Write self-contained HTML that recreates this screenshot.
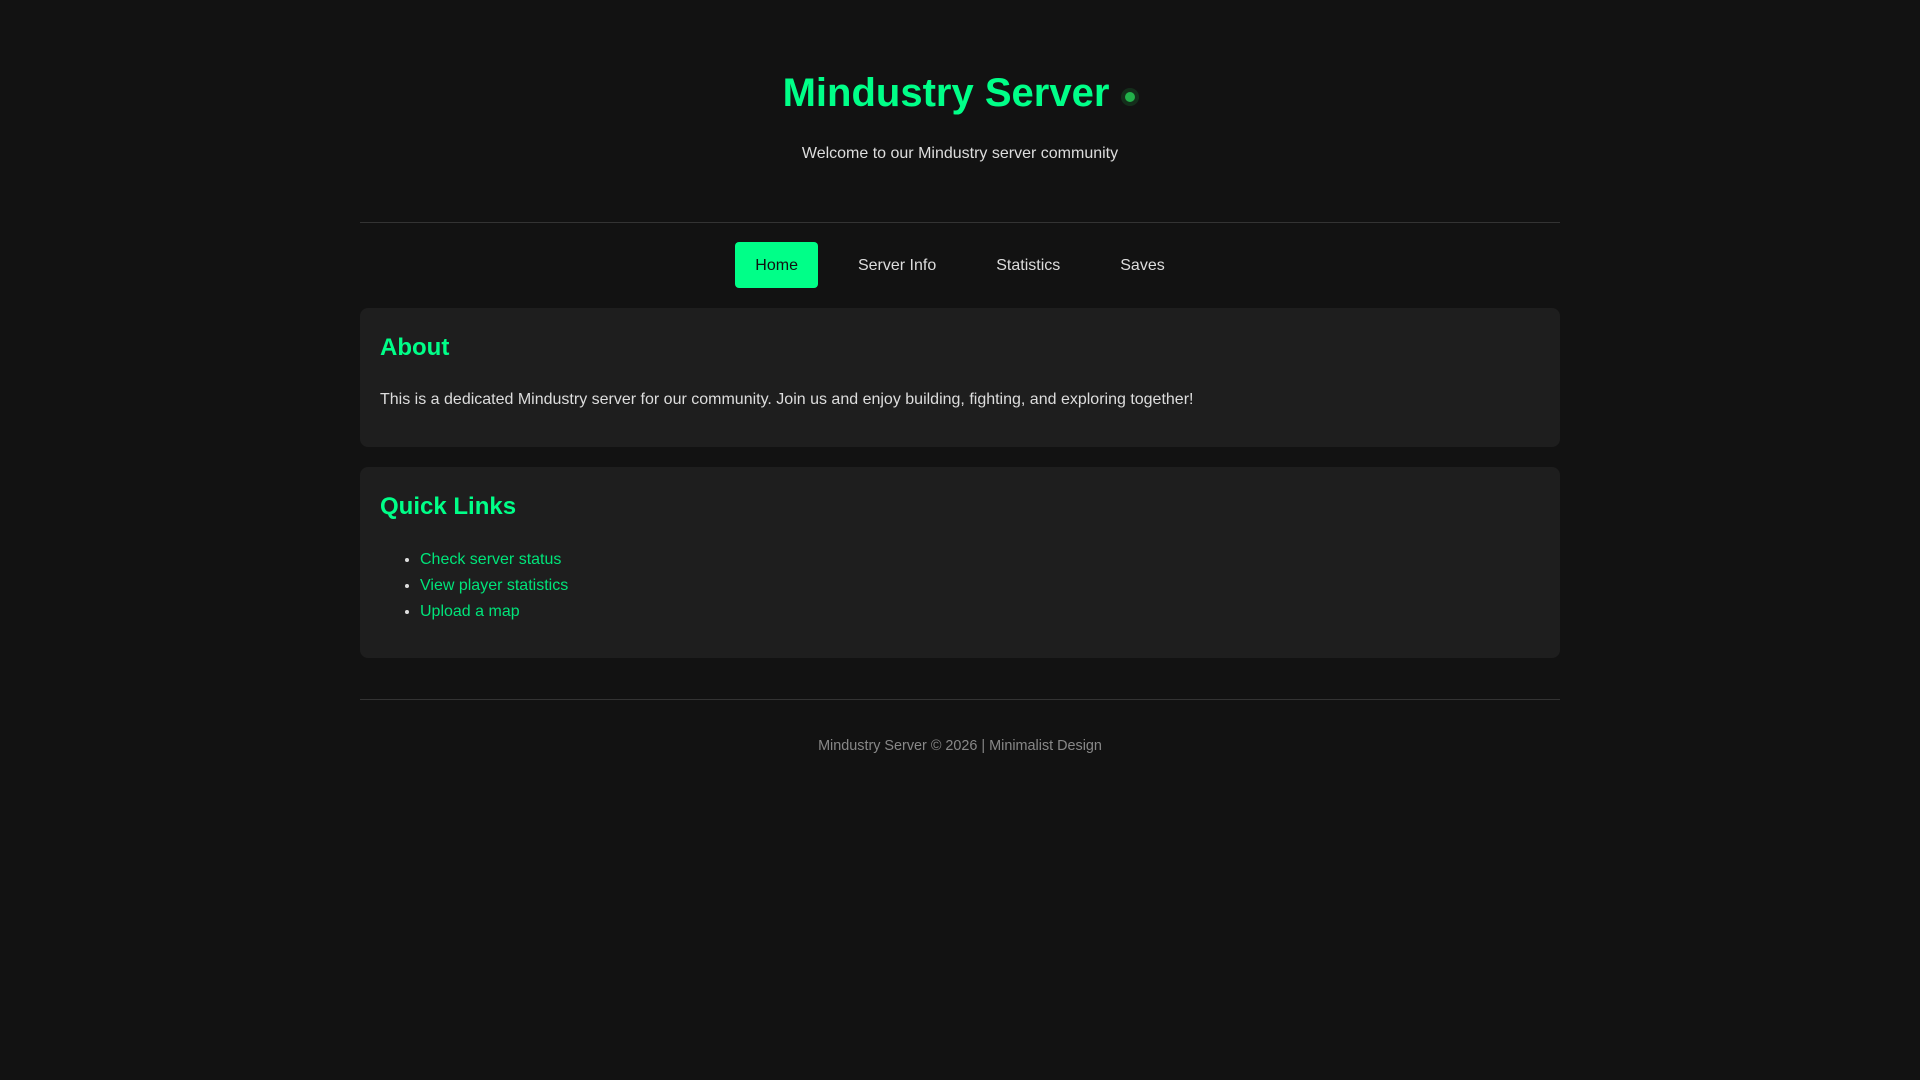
<!DOCTYPE html>
<html><head><meta charset="utf-8"><style>
*{box-sizing:border-box}
html,body{margin:0;padding:0;background:#121212;font-family:"Liberation Sans",Arial,sans-serif;color:#ddd}
.c{width:1200px;margin:0 auto;position:relative}
h1{margin:0;padding-top:69px;height:48px;line-height:48px;font-size:40px;font-weight:bold;color:#00ff88;text-align:center;box-sizing:content-box}
.dot{display:inline-block;width:10px;height:10px;border-radius:50%;background:#22b04a;box-shadow:0 0 0 4px rgba(34,176,74,.18);vertical-align:middle;margin-left:16px;margin-right:2px;position:relative;top:2px}
.sub{text-align:center;font-size:16px;line-height:18px;margin:28px 0 0;color:#ddd}
.hr{height:1px;background:#333;margin-top:59px}
nav{display:flex;justify-content:center;gap:20px;margin-top:19px;height:46px}
nav a{display:block;padding:2px 20px 0;line-height:44px;font-size:16px;color:#ddd;border-radius:4px}
nav a.on{background:#00ff88;color:#111}
.card{background:#1e1e1e;border-radius:8px;padding:20px;margin-top:20px}
h2{margin:0;font-size:24px;line-height:40px;color:#00ff88}
p{margin:23px 0 18px;font-size:16px;line-height:18px}
ul{margin:20px 0 13px;padding-left:40px;font-size:16px;line-height:26px}
li a{color:#00e47a}
.f{height:1px;background:#333;margin-top:41px}
.ft{text-align:center;font-size:14.4px;line-height:17px;margin-top:38px;color:#888}
</style></head><body><div class="c">
<h1>Mindustry Server<span class="dot"></span></h1>
<div class="sub">Welcome to our Mindustry server community</div>
<div class="hr"></div>
<nav><a class="on">Home</a><a>Server Info</a><a>Statistics</a><a>Saves</a></nav>
<div class="card"><h2>About</h2><p>This is a dedicated Mindustry server for our community. Join us and enjoy building, fighting, and exploring together!</p></div>
<div class="card"><h2>Quick Links</h2><ul><li><a>Check server status</a></li><li><a>View player statistics</a></li><li><a>Upload a map</a></li></ul></div>
<div class="f"></div>
<div class="ft">Mindustry Server © 2026 | Minimalist Design</div>
</div></body></html>
